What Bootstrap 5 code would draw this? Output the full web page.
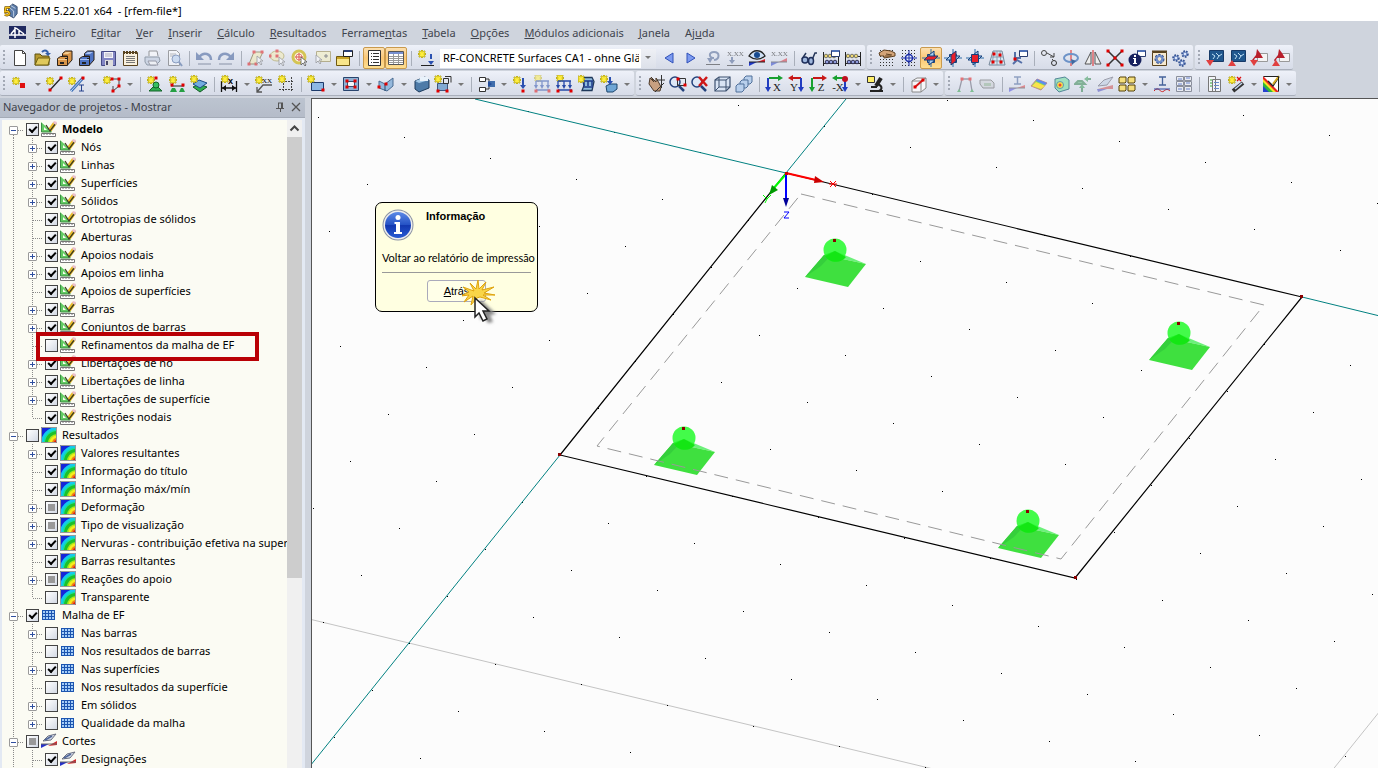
<!DOCTYPE html>
<html lang="pt">
<head>
<meta charset="utf-8">
<meta name="viewport" content="width=device-width, initial-scale=1">
<title>RFEM 5.22.01 x64 - [rfem-file*]</title>
<link href="https://cdn.jsdelivr.net/npm/bootstrap@5.3.0/dist/css/bootstrap.min.css" rel="stylesheet">
<style>
  body { font: 11px/18px "Noto Sans", "Open Sans", sans-serif; color: #000; background: #cfd4dd; }
  button { font: inherit; }
  .titlebar { height: 21px; background: #fff; white-space: pre; }
  .menubar { height: 24px; }
  .menubar a { color: #3f444d; text-decoration: none; padding: 0 8px 0 7px; }
  .toolrow { height: 26px; }
  .toolstrip { height: 25px; background: linear-gradient(#eef1f9, #e2e6f0 45%, #d7dce8); border-bottom: 1px solid #a9afbb; border-radius: 2px; padding: 2px 1px 0 9px; margin-right: 2px; position: relative; }
  .toolstrip::before { content: ""; position: absolute; left: 3px; top: 5px; bottom: 4px; width: 2px; background: repeating-linear-gradient(#a3a9b5 0 2px, transparent 2px 4px); }
  .tool { width: 22px; height: 22px; border: 1px solid transparent; background: none; padding: 0; }
  .tool svg { width: 18px; height: 18px; display: block; margin: auto; }
  .tool.on { border-color: #c99a4d; border-radius: 2px; background: linear-gradient(#fce0b0, #fbc775 50%, #fddf92); }
  .drop { width: 13px; height: 22px; border: 0; background: none; padding: 0 0 0 4px; }
  .drop::before { content: ""; display: block; border: 3px solid transparent; border-top-color: #777; border-bottom: 0; width: 6px; }
  .split { width: 8px; height: 15px; background: linear-gradient(#a9afba, #a9afba) 4px 0 / 1px 100% no-repeat; }
  .casebox { display: block; width: 216px; height: 19px; border: 0; padding: 0 17px 0 3px; margin: 0 2px 0 3px; border-radius: 0; appearance: none; color: #000; font: inherit; text-overflow: clip;
    background: linear-gradient(#fff, #fff) 0 0 / 201px 100% no-repeat, linear-gradient(#eef0f5, #dde1ea); }
  .casewrap { position: relative; }
  .casewrap::after { content: ""; position: absolute; right: 7px; top: 7px; border: 3px solid transparent; border-top-color: #777; border-bottom: 0; pointer-events: none; }

  .navigator { width: 305px; background: #e3e9f3; margin-top: 1px; }
  .panelhead { height: 20px; background: linear-gradient(#bcc4d0, #b5bcc9); color: #3c414a; border-bottom: 1px solid #a4abb7; padding: 0 1px 2px 3px; }
  .panelhead button { border: 0; background: none; padding: 0; width: 16px; height: 16px; }
  .panelhead svg { display: block; width: 12px; height: 12px; margin: 2px; }
  .panelbody { padding-top: 2px; }
  .tree { background: #fbfbf3; margin-left: 2px; overflow: hidden; }
  .tree ul { list-style: none; margin: 0; padding: 0; }
  .treeitem { height: 18px; white-space: nowrap; }
  .cell { width: 19px; height: 18px; flex: none; position: relative; }
  .cell.line::before { content: ""; position: absolute; left: 11px; top: 0; height: 18px; width: 1px; background: repeating-linear-gradient(#8a8a8a 0 1px, transparent 1px 2px); }
  .cell.first::before { top: 9px; height: 9px; }
  .cell.last::before { height: 10px; }
  .cell.arm::after { content: ""; position: absolute; left: 12px; right: -3px; top: 10px; height: 1px; background: repeating-linear-gradient(90deg, #8a8a8a 0 1px, transparent 1px 2px); }
  .twist { position: absolute; z-index: 1; left: 7px; top: 6px; width: 9px; height: 9px; border: 1px solid #9a9a9a; border-radius: 1px; background: #fff; padding: 0; }
  .twist::before, .twist.plus::after { content: ""; position: absolute; background: #2f4f9f; left: 1px; right: 1px; top: 3px; height: 1px; }
  .twist.plus::after { left: 3px; right: 3px; top: 1px; bottom: 1px; height: auto; }
  .tick { appearance: none; margin: 0 2px 0 5px; width: 13px; height: 13px; flex: none; border: 1px solid #444; background: linear-gradient(135deg, #fff, #d3d9e4); }
  .tick:checked::after { content: ""; display: block; margin: 2px 0 0 2px; width: 8px; height: 5px; border: solid #000; border-width: 0 0 2px 2px; transform: rotate(-47deg); }
  .tick.mixed::after { content: ""; display: block; margin: 2px; width: 7px; height: 7px; background: #999; }
  .treeitem svg { width: 16px; height: 16px; flex: none; margin-right: 5px; }
  .flagged { position: relative; }
  .flagged::after { content: ""; position: absolute; z-index: 2; left: 34px; top: -4px; width: 223px; height: 29px; border: 4px solid #b90005; }
  .scroller { width: 15px; background: #f0f0f0; margin-right: 3px; }
  .scroller svg { width: 15px; height: 17px; display: block; }
  .thumb { height: 68%; background: #cdcdcd; }

  .viewport { background: #fcfcfc; border-left: 1px solid #555; border-top: 1px solid #555; margin-left: 6px; margin-top: 1px; position: relative; }
  .viewport > svg { position: absolute; inset: 0; width: 100%; height: 100%; }
  .notice { position: absolute; left: 63px; top: 103px; width: 163px; height: 110px; padding: 6px; background: #ffffe1; border: 1px solid #000; border-radius: 7px; font: 11px/14px "Liberation Sans", Arial, sans-serif; }
  .notice .info { width: 32px; height: 32px; }
  .notice .message { white-space: nowrap; margin: 10px 0 0; font-family: Lato, "Liberation Sans", sans-serif; }
  .notice hr { margin: 7px 0; border-color: #999; opacity: 1; }
  .back { width: 59px; height: 22px; border: 1px solid #aab; border-radius: 3px; background: #ffffe8; padding: 0; }
  .pointer { position: absolute; left: 86px; top: 75px; width: 40px; height: 50px; }
</style>
</head>
<body class="vh-100 d-flex flex-column overflow-hidden">

<header class="titlebar d-flex align-items-center flex-shrink-0 gap-1">
  <svg class="ms-1" width="14" height="18" viewBox="0 0 16 18"><path d="M5 5L10 1l5 3v8l-4 5-5-3z" fill="#5b7ba8" stroke="#34496b"/><path d="M8 3l5 3M6 5l5 4v7" stroke="#c9d8ec" fill="none"/><path d="M7 5H2l-1 5c4-1 5 0 5 2s-3 2-5 1" fill="none" stroke="#5d4200" stroke-width="3"/><path d="M7 5H2l-1 5c4-1 5 0 5 2s-3 2-5 1" fill="none" stroke="#f6c21c" stroke-width="1.7"/></svg>
  <span>RFEM 5.22.01 x64  - [rfem-file*]</span>
</header>

<nav class="menubar d-flex align-items-center flex-shrink-0" aria-label="Menu">
  <svg class="ms-2 me-1" width="19" height="14" viewBox="0 0 19 14"><rect x="1" width="17" height="13" fill="#202a60"/><path d="M1 9h17M3 8l5-6M7 1v11M8 2l8 6M11 4v5" stroke="#fff" stroke-width="1.500" fill="none"/></svg>
  <a class="ps-1" href="#"><u>F</u>icheiro</a><a href="#">E<u>d</u>itar</a><a href="#"><u>V</u>er</a><a href="#"><u>I</u>nserir</a><a href="#"><u>C</u>álculo</a><a href="#"><u>R</u>esultados</a><a href="#">Ferrame<u>n</u>tas</a><a href="#"><u>T</u>abela</a><a href="#"><u>O</u>pções</a><a href="#"><u>M</u>ódulos adicionais</a><a href="#"><u>J</u>anela</a><a href="#">Aj<u>u</u>da</a>
</nav>

<div class="toolrow d-flex flex-shrink-0" data-tools="new open cabinet bluecabinet save list ~print ~preview | ~undo ~redo | ~polysel ~ellsel ringsel ~rectsel window | !pagelist !table | newload @case left right ~force ~xforce eye ~xbar | glasses abacus2 abacus / handgrid target !planexy planeyz planexz gridplane workplane | copynode rotate mirror split info settings gears / bluedown blueup pdfdown pdfup"></div>
<div class="toolrow d-flex flex-shrink-0" data-tools="node> line member> contour> | nodesup linesup surfsup | dim> text grid | rect> opening> vault> solid boxset> | tree> loadn ~loadl loadl loadbox loadsolid> / grab zoomwin zoomx wire boxes | ax ay az anx> microscope> | clipbox> / ~frame ~tape | ~beam rainbow cube ~greensup ~section yellowset> moment columns | report magic> colors>"></div>

<main class="d-flex flex-grow-1 overflow-hidden">
  <aside class="navigator d-flex flex-column flex-shrink-0">
    <div class="panelhead d-flex align-items-center flex-shrink-0">
      <span class="me-auto">Navegador de projetos - Mostrar</span>
      <button aria-label="Fixar"><svg viewBox="0 0 12 12"><path d="M4 2h5M4.500 2v5M8.500 2v5M7.500 2v5M2 7.500h8M6.500 8v3" stroke="#555" fill="none"/></svg></button>
      <button aria-label="Fechar"><svg viewBox="0 0 12 12"><path d="M2 2l8 8M10 2l-8 8" stroke="#555" stroke-width="1.300"/></svg></button>
    </div>
    <div class="panelbody d-flex flex-grow-1 overflow-hidden">
      <div class="tree flex-grow-1"><ul id="tree"></ul></div>
      <div class="scroller"><svg viewBox="0 0 15 17"><path d="M3.500 10.500l4-4 4 4" fill="none" stroke="#444" stroke-width="2"/></svg><div class="thumb"></div></div>
    </div>
  </aside>

  <section class="viewport flex-grow-1 overflow-hidden">
    <svg aria-label="Modelo">
      <defs>
        <g id="support">
          <path d="M-11 14L0 10l31 13z" fill="#6cf07a"/>
          <path d="M-11 14l42 9-18 23-43-10z" fill="#3fe03f"/>
          <path d="M-11 14L0 10l-14 15-16 11z" fill="#35cf3c"/>
          <circle cy="9" r="11.500" fill="#22fa2a" fill-opacity=".85"/>
          <path d="M-10 15L0 10l11 6C6 23-6 22-10 15z" fill="#14e614"/>
          <rect x="-2" y="-2" width="3" height="3" fill="#8b0000"/>
        </g>
      </defs>
      <g fill="none" stroke="#c4c4c4"><path d="M-86 500L344 603.500L817 717"/><path d="M1076 602L937 775"/></g>
      <g id="dots"></g>
      <g fill="none" stroke="#008080"><path d="M163 0L474 74L534 0M990 198L1076 219M248 356L-10 677"/></g>
      <g fill="none" stroke="#000" stroke-width="1.200"><path d="M474 74L990 198L763 479L248 356z"/></g>
      <use href="#support" x="523" y="142"/><use href="#support" x="867" y="225"/><use href="#support" x="372" y="330"/><use href="#support" x="716" y="413"/>
      <path d="M489 95L952 206L749 460L285 347z" fill="none" stroke="#999" stroke-dasharray="14 8"/>
      <g fill="#8b0000"><path d="M988 196h3v3h-3zM762 477h3v3h-3zM246 354h3v3h-3z"/></g>
      <path d="M474 75l-13 15" stroke="#0f0" stroke-width="2"/><path d="M460 86l6 5-9 5z" fill="#009a00"/>
      <path d="M474 75v29" stroke="#00f" stroke-width="2"/><path d="M471 99h6l-3 9z" fill="#009"/>
      <path d="M474 74l30 7" stroke="#f00" stroke-width="2"/><path d="M503 77l9 6-10 1z" fill="#c00"/>
      <path d="M473 73h3v3h-3z" fill="#c00"/>
      <g fill="none"><path d="M518 82l6 6M524 82l-6 6M517 85h8" stroke="#f00"/><path d="M451 96l4 4 4-4M455 100l-2 4" stroke="#0f0"/><path d="M472 113h5l-5 6h5" stroke="#00f"/></g>
    </svg>
    <div class="notice" role="dialog" aria-label="Informação">
      <div class="d-flex">
        <svg class="info" viewBox="0 0 32 32"><defs><linearGradient id="ig" x2="0" y2="1"><stop stop-color="#5d8ae6"/><stop offset=".5" stop-color="#2351c4"/><stop offset=".52" stop-color="#1238b0"/><stop offset="1" stop-color="#285bd2"/></linearGradient></defs><circle cx="16" cy="16" r="15.500" fill="#8b93a3"/><circle cx="16" cy="16" r="14.500" fill="#eee"/><circle cx="16" cy="16" r="13" fill="url(#ig)"/><circle cx="16" cy="8.500" r="2.500" fill="#fff"/><path d="M12.500 13h5.500v10h2v2h-8v-2h2v-8h-1.500z" fill="#fff"/></svg>
        <strong class="ms-2 ps-1">Informação</strong>
      </div>
      <p class="message">Voltar ao relatório de impressão</p>
      <hr>
      <div class="text-center"><button class="back"><u>A</u>trás</button></div>
      <svg class="pointer" viewBox="0 0 40 50"><defs><filter id="soft"><feGaussianBlur stdDeviation="1.5"/></filter></defs><path d="M18 21l16 15-6 1 3 7-5 1-4-7-4 4z" fill="#888" filter="url(#soft)"/><path d="M1 9l11 4-4-8 6 6 2-9 1 9L24 4l-4 8 12-3-10 6 11 2-12 0 8 5-11-3-3 1-6 7 2-9-9 6 5-7-8 1 8-4z" fill="#f9d548" stroke="#dfa30e"/><path d="M13 20v19l4-4 4 8 4-2-4-8h6z" fill="#fff" stroke="#222" stroke-width="1.500"/></svg>
    </div>
  </section>
</main>

<script src="https://cdn.jsdelivr.net/npm/bootstrap@5.3.0/dist/js/bootstrap.bundle.min.js"></script>
<script>
// Small drawing helpers: every icon lives in an 18 x 18 box.
const p = (d, stroke = '#333', w = 1, fill = 'none') => `<path d="${d}" fill="${fill}" stroke="${stroke}" stroke-width="${w}"/>`;
const f = (d, fill) => `<path d="${d}" fill="${fill}"/>`;
const star = (x = 4, y = 4) => `<g transform="translate(${x} ${y})">${p('M0-4v8M-4 0h8M-3-3l6 6M3-3l-6 6', '#a89a10', 2)}${p('M0-3.500v7M-3.500 0h7M-2.500-2.500l5 5M2.500-2.500l-5 5', '#ffee3c', 1.2)}</g>`;
const red = (...at) => at.map(([x, y]) => `<rect x="${x - 1.5}" y="${y - 1.5}" width="3" height="3" fill="#e00000"/>`).join('');
const down = (x, y = 3, c = '#2a50b0') => p(`M${x} ${y}v8`, c, 2) + f(`M${x - 3} ${y + 7}h6l-3 4z`, c);
const cursor = (x, y) => `<path transform="translate(${x} ${y})" d="M0 0v8l2-2 2 3 1-1-2-3h3z" fill="#fff" stroke="#555" stroke-width=".8"/>`;
const cab = (c, hi) => p('M2.500 9.500l3-2h7v9h-10z', '#2b2118', 1, c) + p('M7.500 4.500l3-2.500h6.500v9l-4.500 5v-9h-5z', '#2b2118', 1, c) + f('M8 5h5l3-2h-5z', hi) + f('M3 10h9v1H3z', hi) + f('M5 13h4v2H5zM10 9h3v1h-3z', '#222');
const mini = p('M9.500 1.500h8v6h-8z', '#2a3d70', 1, '#fff') + f('M10 1h7v2h-7z', '#4d6fb5');
const letter = (t, x = 12) => `<text x="${x}" y="16" font-family="Liberation Serif" font-size="11" text-anchor="middle" fill="#222">${t}</text>`;
const axis = (h, v, t, flip) => (flip ? p('M4 3h10', h, 2) + f('M6 0v6L1 3z', h) + p('M14 3v11', v, 2) + f('M11 12h6l-3 5z', v) : p('M4 3h10', h, 2) + f('M13 0v6l5-3z', h) + p('M3 3v11', v, 2) + f('M0 12h6l-3 5z', v)) + letter(t, flip ? 7 : 12);
// Three work planes; the highlighted one is drawn last, so that it stays on top.
const sky = '#a6cdf0', hot = '#e8202a';
const plane = which => { const parts = { xz: 'M5.500 5.500h7v8h-7z', yz: 'M7 6l5-4v10l-5 4z', xy: 'M2 11l4-4h10l-4 4z' };
  return p('M9 0v18M0 9h18', '#2e6ca8') + Object.keys(parts).filter(k => k !== which).map(k => p(parts[k], '#153f7a', 1, sky)).join('') + p(parts[which], '#153f7a', 1, hot); };
const abacus = p('M1.500 3v14M16.500 3v14M1 14.500h16M1 7.500h16', '#222') + [4,8,12].map(x => `<circle cx="${x}" cy="7" r="1.800" fill="#f0d872" stroke="#776"/><circle cx="${x + 1}" cy="13" r="1.800" fill="#8f9cdc" stroke="#335"/>`).join('');
const mesh = [2,5,8,11,14,17].map(y => p(`M2 ${y - .5}h15`, '#333', 1).replace('/>', ' stroke-dasharray="1 2"/>')).join('');
const load = c => p('M2 6h13M2 6v5M8 6v5M14 6v5M2 15h14', c, 1.3) + f('M0 10h4l-2 4zM6 10h4l-2 4zM12 10h4l-2 4z', c);
const bluebox = p('M3 6l10-4 4 3v8l-10 4-4-3z', '#1c3b5c', 1, '#4e7ba8') + f('M3 6l10-4 4 3-10 3z', '#a7cbe8');
const screen = p('M3.500 1.500h14v11h-14z', '#173a68', 1, '#20578e') + p('M6 5l3 2-2 3M10 4l3 3 3-2M11 10l2-3', '#bfe0f5');
const pdf = p('M7.500 4.500h10v8h-10z', '#999', 1, '#f4f4f4') + f('M7 0l3 4 3 5H5l-2 4-1-2 4-5z', '#b81f2b');
const mag = (x = 7, y = 7) => `<circle cx="${x}" cy="${y}" r="5" fill="#dce9fa" fill-opacity=".6" stroke="#24427c" stroke-width="1.500"/>` + p(`M${x + 4} ${y + 4}l5 5`, '#24427c', 2.5);

const icons = {
  new: p('M3.500 1.500h8l3 3v12h-11z', '#444', 1, '#fff') + p('M11.500 1.500v3h3', '#444'),
  open: p('M2 16V5h5l2 2h7v9z', '#5c5010', 1, '#b7992f') + p('M2 16l3-7h12l-2 7z', '#706010', 1, '#e0c95c') + p('M9 3c3-3 6-1 6 2', '#345fa8', 2) + f('M12 4h6l-3 3z', '#345fa8'),
  cabinet: cab('#d8954a', '#f4cd92'), bluecabinet: cab('#4f74c4', '#a9c2f2'),
  save: p('M2.500 2.500h14v14h-14z', '#454a85', 1, '#8286c4') + f('M5 3h9v6H5z', '#f4f4fa') + p('M6 5h7M6 7h7', '#aab') + f('M6 11h8v6H6z', '#ddd') + f('M7 12h2v4H7z', '#446'),
  list: p('M2.500 3.500h14v13h-14z', '#59431f', 1, '#f9f0dd') + p('M2 3.500h15', '#59431f', 3).replace('/>', ' stroke-dasharray="2 1"/>') + p('M5 7.500h9M5 9.500h9M5 11.500h9M5 13.500h9', '#777'),
  print: p('M6 7V2h8l1 5', '#444', 1, '#fff') + p('M2 8h14l1 4-4 4H4l-2-3z', '#456', 1, '#bcc9dd') + p('M5 12h8l2 4H7z', '#556', 1, '#fff'),
  preview: p('M3.500 1.500h8l3 3v12h-11z', '#555', 1, '#fff') + p('M5 5h6M5 7h4', '#888') + '<circle cx="11" cy="10" r="4" fill="#b9d3f2" stroke="#3a5c96"/>' + p('M14 13l3 4', '#3a5c96', 2),
  undo: p('M4 8c5-6 12-3 12 3', '#2f5090', 2.5) + f('M1 3v8h8z', '#2f5090') + f('M3 14h13v2H3z', '#8a93a8'),
  redo: p('M14 8C9 2 2 5 2 11', '#2f5090', 2.5) + f('M17 3v8H9z', '#2f5090') + f('M2 14h13v2H2z', '#8a93a8'),
  polysel: p('M2 15L7 3h9l-6 12z', '#5a4a10', 1, '#f6edae') + red([7,3],[15,3],[2,15],[9,15]) + cursor(10,7),
  ellsel: '<ellipse cx="8" cy="7" rx="7" ry="5" fill="#f6edae" stroke="#a09030"/>' + red([1,7],[8,7],[8,2]) + cursor(10,8),
  ringsel: '<circle cx="8" cy="8" r="6" fill="#fdf6e0" stroke="#d4c454" stroke-width="3"/><circle cx="8" cy="8" r="3" fill="none" stroke="#e08080"/>' + p('M8 4v8M4 8h8', '#d55') + cursor(10,8),
  rectsel: p('M3.500 2.500h14v10h-14z', '#8a7a30', 1, '#f8f2b8') + p('M11 7h4M13 5v4', '#333') + cursor(3,6),
  window: p('M1.500 7.500h13v9h-13z', '#705a10', 1, '#f8e58a') + f('M2 8h12v2H2z', '#c9a328') + p('M8.500 1.500h9v6h-9z', '#222', 1, '#fff') + f('M9 1h8v2h-8z', '#2b3f75'),
  pagelist: p('M3.500 1.500h12v15h-12z', '#333', 1, '#fff') + p('M6 4.500h1M8 4.500h6M6 7.500h1M8 7.500h6M6 10.500h1M8 10.500h6M6 13.500h1M8 13.500h6', '#333'),
  table: p('M1.500 2.500h15v13h-15z', '#555', 1, '#fff') + f('M2 3h14v2H2z', '#7890d0') + p('M2 7.500h14M2 9.500h14M2 11.500h14M2 13.500h14M6.500 5v10M11.500 5v10', '#999'),
  newload: star(5,5) + down(14,5).replace('v8', 'v5') + p('M4 16.500h13', '#222'),
  left: p('M13 4v10L5 9z', '#3050b8', 1, '#7d9bf0'), right: p('M5 4v10l8-5z', '#3050b8', 1, '#7d9bf0'),
  force: p('M10 11c6-1 6-8 0-8s-5 6 0 6', '#41598a', 2) + f('M3 9h6l-3 5z', '#41598a') + p('M2 15.500h14', '#222'),
  xforce: '<text x="1" y="7" font-family="Liberation Serif" font-size="7">X.XX</text>' + p('M6 8v4', '#41598a', 2) + f('M3 11h6l-3 4z', '#41598a') + p('M1 16.500h16', '#222'),
  eye: p('M1 7c4-7 12-7 16 0-5 4-11 4-16 0z', '#222', 1.3, '#cfe0f5') + '<circle cx="9" cy="6" r="3" fill="#174a90"/>' + f('M9 13h8V10z', '#d8202c') + f('M1 13h8l-8 4z', '#2038c8') + p('M1 13h16', '#222'),
  xbar: '<text x="1" y="7" font-family="Liberation Serif" font-size="7">X.XX</text>' + f('M9 13h8V9z', '#d8202c') + f('M1 13h8l-8 4z', '#2038c8') + p('M1 13h16', '#333'),
  glasses: p('M2 10l4-6M12 11l3-7h2', '#26365a', 1.5) + '<ellipse cx="5" cy="11" rx="3" ry="3" fill="#9fb7dd" stroke="#1f2f5b" stroke-width="1.500"/><ellipse cx="11" cy="12" rx="2.500" ry="3.500" fill="#9fb7dd" stroke="#1f2f5b" stroke-width="1.500"/>',
  abacus2: abacus + mini, abacus,
  handgrid: mesh + p('M1 4l5-3 7 1 4 2v3l-5 1-6 1 0-2-4 0z', '#5e4020', 1, '#d4a478') + p('M8 5l6 1M7 7l6 0', '#5e4020', 1),
  target: mesh + '<circle cx="9" cy="9" r="3.500" fill="#e8eefc" stroke="#1c2fa8" stroke-width="1.500"/>' + p('M9 1v16M1 9h16', '#1c2fa8'),
  planexy: plane('xy'), planeyz: plane('yz'), planexz: plane('xz'),
  gridplane: p('M5 2h9l3 14H1z', '#789', 1, '#d7e6f3') + p('M3 8h12M2 12h14M9 2v14M6 2L4 16M12 2l1 14', '#8aa0b0') + red([6,5],[12,6],[5,13],[13,13]),
  workplane: p('M5 3v9M5 9h6M3 15l4-4 5 3', '#5570a8', 2) + red([5,10]) + mini,
  copynode: '<circle cx="4" cy="4" r="2.500" fill="none" stroke="#444"/><circle cx="14" cy="14" r="2.500" fill="none" stroke="#333"/>' + p('M7 4l7 4M14 4v4h-4M12 10l2 2', '#444'),
  rotate: p('M9 1v16', '#d22') + '<ellipse cx="9" cy="9" rx="7" ry="4" fill="none" stroke="#6d93c8" stroke-width="2"/>' + f('M9 10l5 2-4 4z', '#41699f'),
  mirror: p('M9 1v16', '#d22') + p('M7 3v12H1zM11 3v12h6z', '#555', 1, '#eee'),
  split: p('M2 2l14 14M16 2L2 16', '#333', 1.5) + red([2,2],[16,2],[2,16],[16,16],[9,9]),
  info: mini + '<circle cx="7" cy="11" r="6.500" fill="#16215e"/>' + f('M6 6h2v2H6zM5 9h3v5h1v1H5v-1h1v-4H5z', '#fff'),
  settings: p('M2.500 3.500h14v13h-14z', '#59431f', 1, '#f6e9cf') + p('M2 2.500h15', '#59431f', 2) + '<circle cx="9.500" cy="10" r="3.500" fill="none" stroke="#2e4d90" stroke-width="3" stroke-dasharray="2 1"/><circle cx="9.500" cy="10" r="3" fill="none" stroke="#6e8cc8" stroke-width="2"/>',
  gears: [[4,9],[13,5],[10,14]].map(([x, y]) => `<circle cx="${x}" cy="${y}" r="2.500" fill="none" stroke="#2e4d90" stroke-width="2.500" stroke-dasharray="1.500 1"/><circle cx="${x}" cy="${y}" r="2" fill="#dbe6fb" stroke="#4e6db0"/>`).join(''),
  bluedown: screen + f('M0 11h8l-4 6z', '#e04040'), blueup: screen + f('M0 17h8l-4-6z', '#e04040'),
  pdfdown: pdf + f('M0 11h8l-4 6z', '#e04040'), pdfup: pdf + f('M0 17h8l-4-6z', '#e04040'),
  node: star(5,6) + f('M9 8h5v5H9z', '#e01010'),
  line: star(4,6) + p('M4 15L15 3', '#222', 1.3) + red([4,15],[15,3]),
  member: star(4,6) + p('M3 16L15 3', '#3e70b8', 3) + p('M3 16L15 3', '#bcd8f4', 1) + red([15,3]) + p('M11 10h5M13.500 10v6M11 16h5', '#26428c'),
  contour: p('M8 4h8v7l-6 5V11', '#444') + star(4,5) + red([9,4],[16,4],[16,11],[10,16]),
  nodesup: star(5,5) + p('M3 16l4-4h5l4 4z', '#14622a', 1, '#2fae50') + '<circle cx="10" cy="10" r="3" fill="#36c060" stroke="#14622a"/>' + red([10,3]),
  linesup: star(5,5) + p('M3 11h13', '#222') + f('M2 17l2-4h3l2 4zM11 17l2-4h2l2 4z', '#26a044') + red([4,10],[15,10]),
  surfsup: p('M3 12l6-3 8 3-7 5z', '#165b28', 1, '#2fae50') + p('M3 9l6-4 8 3-7 5z', '#1c4b83', 1, '#72acdf') + star(4,4),
  dim: p('M1.500 6v11M16.500 6v11M2 13h14', '#111', 1.3) + f('M2 13l4-3v6zM16 13l-4-3v6z', '#111') + star(5,4) + '<text x="8" y="9" font-size="9" font-weight="bold" font-family="Liberation Sans">x</text>',
  text: star(4,5) + '<text x="7" y="8" font-size="7" font-family="Liberation Serif">XX</text>' + p('M2 17l6-7h9M2 12v5h5', '#555', 1.3),
  grid: ['M2 6.500h15', 'M2 14.500h15', 'M6.500 2v15', 'M14.500 2v15'].map(d => p(d, '#444').replace('/>', ' stroke-dasharray="2 1"/>')).join('') + star(5,4),
  rect: p('M4.500 7.500h12v8h-12z', '#1d3a6a', 1, '#8db8e4') + star(4,4) + red([16,15]),
  opening: p('M1.500 2.500h15v13h-15z', '#29456e', 1, '#8fb2d4') + p('M5.500 6.500h7v5h-7z', '#3a5070', 1, '#f4f6fb') + red([5,6],[13,6],[5,12],[13,12]),
  vault: p('M2 6l6 3 8-6v8l-6 5-8-3z', '#4a6c92', 1, '#94b8dc') + p('M8 9v7', '#26486e') + red([2,12],[9,9]),
  solid: bluebox + f('M8 2h8v4H8z', '#e9f2fb'),
  boxset: p('M3.500 8.500h10v7h-10z', '#3c557c', 1, '#82aad4') + p('M9.500 3.500h5v5h-5zM11 1.500h6v6', '#333') + star(4,4) + red([4,16],[13,16]),
  tree: p('M2.500 2.500h6v4h-6zM2.500 12.500h6v4h-6z', '#333', 1, '#fff') + p('M9 4h3v10H9', '#333') + f('M12 6h6v6h-6z', '#3f6dac') + f('M11 6l4 3-4 3z', '#234b98'),
  loadn: star(5,5) + down(11,3) + red([11,16]),
  loadl: star(4,3) + load('#2649a8') + red([2,16],[15,16]),
  loadbox: p('M4 2.500h10l2 4-2 9H4l2-5z', '#1f385a', 1.3, '#8ebadd') + p('M6 6h9M6 12h9M6 6v5M10 6v5M14 6v5', '#1c3988', 1.5) + star(3,4),
  loadsolid: star(4,4) + p('M6 11l4-2h7v5l-4 3H7z', '#1d466d', 1, '#6fa6d5') + p('M10 2v5', '#2a50b0', 2) + f('M7 6h6l-3 4z', '#2a50b0'),
  grab: p('M3 3l4 4-3-5 5 5V3l3 5 2 4-1 4H7L2 9z', '#4c3a2a', 1, '#c8a080') + p('M14.500 0v13M10 5h8M8 17L17 8', '#333'),
  zoomwin: mag(6,7) + p('M8.500 3.500h8v7h-8z', '#333') + red([9,4],[16,10]),
  zoomx: mag(6,7) + p('M8 2l8 9M16 2l-8 9', '#d01818', 2.500),
  wire: p('M2 5l4-3h11v10l-4 4H2z', '#3c506f', 1.2, '#d9e4f4') + p('M2 5h11v11M13 5l4-3M6 2v10L2 16M6 12h11', '#3c506f'),
  boxes: [[9,1],[5,5],[1,9]].map(([x, y]) => p(`M${x} ${y + 2}l2-2h6v6l-2 2h-6z`, '#51709a', 1, '#b8cfec')).join(''),
  ax: axis('#18a030', '#203cc0', 'X'), ay: axis('#c81818', '#203cc0', 'Y', 1), az: axis('#c81818', '#18a030', 'Z'), anx: axis('#18a030', '#203cc0', '-X', 1) + '<circle cx="14" cy="4" r="3" fill="#c01020"/>',
  microscope: p('M15 3l-5 8', '#222', 4) + p('M11 9c5 1 6 5 2 7M4 16h13M5 12h6', '#222', 2) + p('M1.500 1.500h7v6h-7z', '#333', 1, '#fff06a'),
  clipbox: p('M3 6l5-3h9v10l-5 4H3z', '#888', 1, '#f6f6f9') + p('M3 6h9v11M12 6l5-3', '#888') + p('M6 12L14 5', '#d11a1a', 2) + red([6,12],[14,5]),
  frame: p('M3 16L6 4h8l2 12', '#556', 1.3) + red([6,4],[14,4]) + f('M1 17l2-3 2 3zM14 17l2-3 2 3z', '#28a040'),
  tape: p('M2 5h11l3 3v5H5L2 9z', '#555', 1, '#c9ccd0') + f('M6 8h7v3H6z', '#8a8'),
  beam: p('M6 2h7M9.500 2v7M6 9h7', '#3d5b93', 1.5) + f('M1 13h8l-8 4z', '#44d') + f('M9 13h8v-3z', '#d33') + p('M1 13h16', '#444'),
  rainbow: p('M1 11l6-7 10 4-6 7z', '#c88', 1, '#7fdc62') + f('M2 11l4-4 9 4-4 3z', '#fbe24b') + f('M7 4l10 4-2 2-9-4z', '#5f8bf0'),
  cube: p('M3 4l10-2 4 3v9l-10 3-4-4z', '#589', 1, '#9fe0c0') + '<circle cx="8" cy="10" r="3.500" fill="#f8e04a" stroke="#59b"/><circle cx="8" cy="10" r="1.500" fill="#e43"/>',
  greensup: p('M1 9l3-3h4l3 3zM8 17v-5M13 4h4', '#277a42', 2, '#4db06b') + f('M5 13h6l-3-4zM14 1v6l-4-3z', '#2b944a'),
  section: p('M2 11l6-6 9-3-6 8z', '#556', 1, '#bccbe0') + f('M2 14h15v-4z', '#c44') + f('M1 14h10L2 17z', '#44b'),
  yellowset: [[1,2],[10,2],[1,10],[10,10]].map(([x, y]) => p(`M${x} ${y + 1}l1-1h6v5l-1 1h-6z`, '#55420a', 1, '#f5df7c')).join(''),
  moment: p('M6 2h7M9.500 2v8M6 10h7', '#46639a', 1.3) + p('M1 16c5-6 6 3 10 0 2-2 4-2 6 0', '#c22') + p('M1 14h16', '#2b44a0'),
  columns: p('M1.500 1.500h7v4h-7zM9.500 1.500h7v4h-7zM1.500 6.500h7v4h-7zM9.500 6.500h7v4h-7zM1.500 11.500h7v5h-7zM9.500 11.500h7v5h-7z', '#8a8f9c', 1, '#e8ebf2') + p('M3 4h4M11 3h4M3 9h4M11 8h4M3 14h4M11 14h4', '#6a84d0'),
  report: p('M3.500 1.500h7v15h-7zM7.500 4.500h8v12h-8z', '#777', 1, '#f3f5f9') + p('M9 7.500h5M9 10.500h5M9 13.500h5', '#6a8cc8') + p('M5 5h2M5 8h2M5 11h2', '#3a3'),
  magic: star(5,5) + p('M6 16l10-8', '#333', 4) + p('M8 14l7-6', '#c5d7ef', 1.500) + p('M10 2l4 4M14 2l-4 4', '#d11', 1.300),
  colors: f('M1 1h16v16H1z', '#fff') + f('M1 1l16 16H1z', '#e92222') + f('M1 4l13 13H1z', '#f6e224') + f('M1 7l10 10H1z', '#2db838') + f('M1 11l6 6H1z', '#2440d0') + p('M6 6l5 5 6-9', '#222', 1.3) + p('M11 9L17 1', '#d3a823', 2) + p('M1.500 1.500h15v15', '#222'),
  pencilset: f('M0 1l11 10H0z', '#62cc63') + p('M.500 2v9h10', '#3c8c45', 1) + f('M3 6l3 3H3z', '#fbfbf3') + p('M9 9l5-7', '#e8bc2c', 4) + p('M5 4l4 6 6-8', '#3a3a20', 1.3) + f('M13 0l3 1-1 3-3-2z', '#ecc0cc') + p('M.500 12.500h14v3h-14z', '#777', 1, '#fff') + p('M3 12v2M6 12v2M9 12v2M12 12v2', '#777'),
  contours: f('M0 0h16v16H0z', '#1525d8') + [[18,'#1478f0'],[16,'#14c8f0'],[13.5,'#15e0a0'],[12,'#1fc02a'],[9,'#a8e81c'],[7.5,'#f4ee1c'],[5,'#f08018'],[3,'#e01010']].map(([r, c]) => f(`M16 ${16 - Math.min(r, 16)}V16H${16 - Math.min(r, 16)}A${r} ${r} 0 0 1 16 ${16 - Math.min(r, 16)}z`, c)).join('') + p('M.500 .500h15v15H.500z', '#999'),
  femesh: f('M1 3h13v10H1z', '#1c55b0') + [2,5,8,11].map(x => [4,7,10].map(y => `<rect x="${x}" y="${y}" width="2" height="2" fill="#a6cef8"/>`).join('')).join(''),
  cut: p('M2 8l5-5 8-2-5 6z', '#6b7080', 1, '#d5dcea') + p('M4 7l7-4', '#506698', 1.500) + f('M7 13l9-1V8z', '#d5282c') + f('M0 11h8l-8 4z', '#2530c8') + p('M0 11h16', '#666')
};
const svg = (name, size = 18) => `<svg viewBox="0 0 ${size} ${size}" aria-hidden="true">${icons[name]}</svg>`;

// Toolbars: "/" starts a new strip, "|" is a divider, ">" adds a menu arrow, "!" is pressed, "~" is dimmed.
document.querySelectorAll('[data-tools]').forEach(row => {
  row.innerHTML = row.dataset.tools.split(' / ').map(strip => '<div class="toolstrip d-flex align-items-center" role="toolbar">' + strip.split(' ').map(t => {
    if (t === '|') return '<span class="split"></span>';
    if (t === '@case') return '<span class="casewrap"><select class="casebox" aria-label="Caso"><option>RF-CONCRETE Surfaces CA1 - ohne Glättung</option></select></span>';
    const name = t.replace(/[~!>]/g, '');
    return `<button class="tool${t[0] === '!' ? ' on' : ''}${t[0] === '~' ? ' opacity-50' : ''}" aria-label="${name}">${svg(name)}</button>` + (t.endsWith('>') ? `<button class="drop" aria-label="${name}: mais"></button>` : '');
  }).join('') + '</div>').join('');
});

// Navigator: "+" has children, "x" ticked, "o" partly ticked, "*" flagged.
const groups = [
  ['x', 'Modelo', 'pencilset', ['+x Nós', '+x Linhas', '+x Superfícies', '+x Sólidos', 'x Ortotropias de sólidos', 'x Aberturas', '+x Apoios nodais', '+x Apoios em linha', 'x Apoios de superfícies', '+x Barras', '+x Conjuntos de barras', '* Refinamentos da malha de EF', '+x Libertações de nó', '+x Libertações de linha', '+x Libertações de superfície', 'x Restrições nodais']],
  ['', 'Resultados', 'contours', ['+x Valores resultantes', 'x Informação do título', 'x Informação máx/mín', '+o Deformação', '+o Tipo de visualização', '+x Nervuras - contribuição efetiva na superfície', 'x Barras resultantes', '+o Reações do apoio', '- Transparente']],
  ['x', 'Malha de EF', 'femesh', ['+- Nas barras', '- Nos resultados de barras', '+x Nas superfícies', '- Nos resultados da superfície', '+- Em sólidos', '+- Qualidade da malha']],
  ['o', 'Cortes', 'cut', ['x Designações', 'x Limites']]
];
let n = 0;
const entry = (flags, label, icon) => { const id = 'n' + n++; return `<input type="checkbox" class="tick${flags.includes('o') ? ' mixed' : ''}" id="${id}"${flags.includes('x') ? ' checked' : ''}>${svg(icon, 16)}<label for="${id}">${label}</label>`; };
document.getElementById('tree').innerHTML = groups.map(([fl, name, icon, kids], g) =>
  `<li><div class="treeitem d-flex align-items-center${g ? '' : ' fw-bold'}"><span class="cell line arm${g ? '' : ' first'}"><button class="twist" aria-label="Fechar ${name}"></button></span>${entry(fl, name, icon)}</div><ul>` +
  kids.map((k, i) => { const s = k.indexOf(' '), fk = k.slice(0, s);
    return `<li class="treeitem d-flex align-items-center${fk === '*' ? ' flagged' : ''}"><span class="cell line"></span><span class="cell line arm${i === kids.length - 1 ? ' last' : ''}">${fk[0] === '+' ? '<button class="twist plus" aria-label="Abrir"></button>' : ''}</span>${entry(fk, k.slice(s + 1), icon)}</li>`; }).join('') + '</ul></li>').join('');

// Work-plane grid points, spanned by the two axis directions from the origin.
let dots = '';
for (let a = -8; a <= 14; a++) for (let b = -8; b <= 16; b++) {
  const x = Math.round(474 + a * 86 - b * 37.67), y = Math.round(74 + a * 20.67 + b * 47);
  if (x >= 0 && x < 2400 && y >= 0 && y < 1600) dots += `<rect x="${x}" y="${y}" width="1" height="1"/>`;
}
document.getElementById('dots').innerHTML = dots;
</script>
</body>
</html>
